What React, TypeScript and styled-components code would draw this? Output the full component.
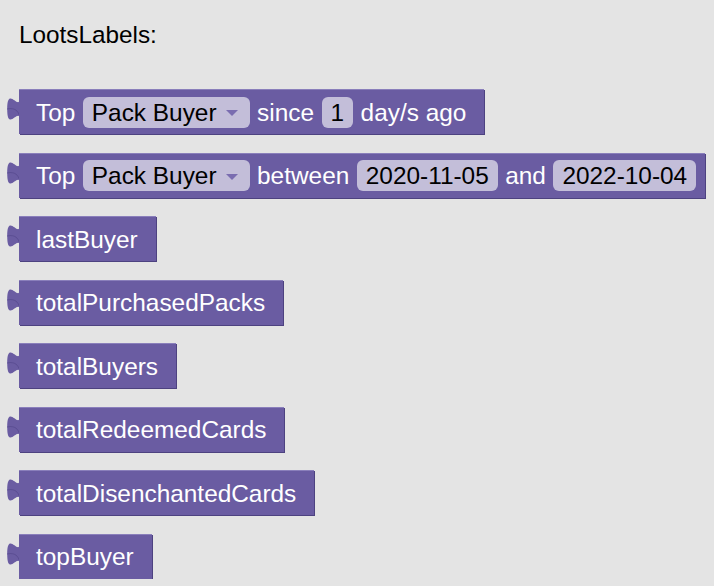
import React from 'react';
import styled, { createGlobalStyle } from 'styled-components';

const GlobalStyle = createGlobalStyle`
  html, body {
    margin: 0;
    background-color: #e4e4e4;
  }
  body {
    font-family: "Liberation Sans", Arial, Helvetica, sans-serif;
  }
`;

const Page = styled.div`
  padding: 23px 19px 0 19px;
  display: flex;
  flex-direction: column;
  align-items: flex-start;
`;

const Title = styled.div`
  font-size: 24.3px;
  line-height: 24px;
  color: #000;
  margin-bottom: 42px;
`;

const BlockList = styled.div`
  display: flex;
  flex-direction: column;
  align-items: flex-start;
  gap: 18.5px;
`;

const BlockRow = styled.div`
  display: flex;
  align-items: flex-start;
  margin-left: -13px;
`;

const Tab = styled.svg`
  width: 14px;
  height: 45px;
  display: block;
  margin-right: -1px;
  flex-shrink: 0;
`;

const BlockBody = styled.div<{ $fieldEnd?: boolean }>`
  height: 45px;
  box-sizing: border-box;
  display: flex;
  align-items: center;
  gap: 7.5px;
  padding: 0 ${(p) => (p.$fieldEnd ? '9px' : '18px')} 0 17px;
  background: #6a5ca2;
  border-top: 1px solid #8a7fbb;
  box-shadow: 1px 1px 0 #4d4280;
  color: #fff;
  font-size: 24.4px;
  white-space: nowrap;
`;

const Label = styled.span`
  line-height: 31px;
`;

const Field = styled.span`
  display: inline-flex;
  align-items: center;
  height: 31px;
  padding: 0 9px;
  border-radius: 6px;
  background: #c3bed9;
  color: #000;
  line-height: 31px;
`;

const Arrow = styled.span`
  width: 0;
  height: 0;
  margin: 2px 3px 0 9px;
  border-left: 6px solid transparent;
  border-right: 6px solid transparent;
  border-top: 6px solid #7a6db0;
`;

const PuzzleTab = () => (
  <Tab viewBox="0 0 14 45">
    <path
      d="M15,8 L14,8 c 0,16 -12.8,-12.8 -12.8,12 s 12.8,-4 12.8,12 L15,32 Z"
      fill="#6a5ca2"
    />
    <path
      d="M1.2,20 s 12.8,-4 12.8,12"
      fill="none"
      stroke="#5a4d92"
      strokeWidth="1"
    />
  </Tab>
);

type Part = { text: string; kind?: 'field' | 'dropdown' };

const Block = ({ parts }: { parts: Part[] }) => {
  const last = parts[parts.length - 1];
  return (
    <BlockRow>
      <PuzzleTab />
      <BlockBody $fieldEnd={!!last.kind}>
        {parts.map((p, i) =>
          p.kind === 'dropdown' ? (
            <Field key={i}>
              {p.text}
              <Arrow />
            </Field>
          ) : p.kind === 'field' ? (
            <Field key={i}>{p.text}</Field>
          ) : (
            <Label key={i}>{p.text}</Label>
          )
        )}
      </BlockBody>
    </BlockRow>
  );
};

const blocks: Part[][] = [
  [
    { text: 'Top' },
    { text: 'Pack Buyer', kind: 'dropdown' },
    { text: 'since' },
    { text: '1', kind: 'field' },
    { text: 'day/s ago' },
  ],
  [
    { text: 'Top' },
    { text: 'Pack Buyer', kind: 'dropdown' },
    { text: 'between' },
    { text: '2020-11-05', kind: 'field' },
    { text: 'and' },
    { text: '2022-10-04', kind: 'field' },
  ],
  [{ text: 'lastBuyer' }],
  [{ text: 'totalPurchasedPacks' }],
  [{ text: 'totalBuyers' }],
  [{ text: 'totalRedeemedCards' }],
  [{ text: 'totalDisenchantedCards' }],
  [{ text: 'topBuyer' }],
];

const App = () => {
  return (
    <>
      <GlobalStyle />
      <Page>
        <Title>LootsLabels:</Title>
        <BlockList>
          {blocks.map((b, i) => (
            <Block key={i} parts={b} />
          ))}
        </BlockList>
      </Page>
    </>
  );
};

export default App;
